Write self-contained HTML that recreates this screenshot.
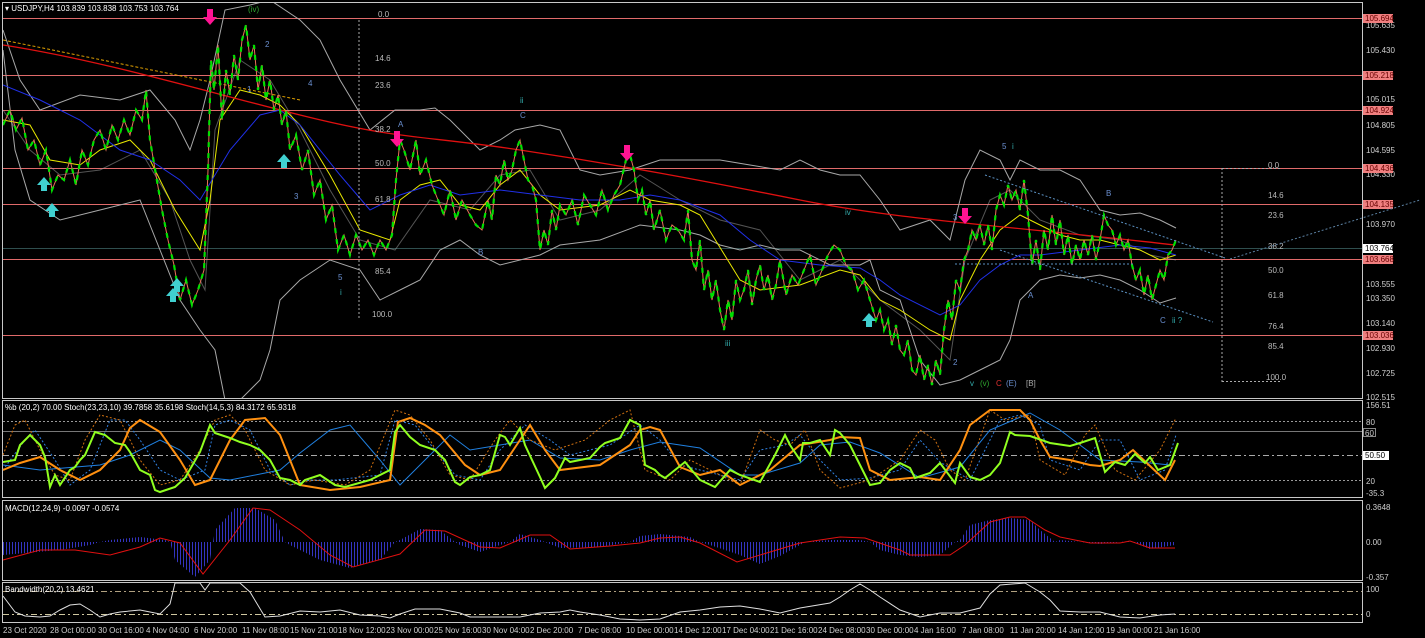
<!DOCTYPE html>
<html><head><meta charset="utf-8">
<style>
html,body{margin:0;padding:0;background:#000;width:1425px;height:638px;overflow:hidden}
svg{display:block}
text{font-family:"Liberation Sans",sans-serif;font-size:8px}
</style></head><body>
<svg width="1425" height="638" xmlns="http://www.w3.org/2000/svg">
<defs>
<pattern id="hb" width="3" height="10" patternUnits="userSpaceOnUse"><rect width="1" height="10" fill="#3434c0"/></pattern>
<clipPath id="cm"><rect x="3" y="3" width="1359" height="395"/></clipPath>
<polyline id="pr" fill="none" stroke-linejoin="miter" points="3,125 10,110 16,130 22,118 28,150 34,140 40,165 46,150 52,190 58,175 64,180 70,160 76,185 82,150 88,165 94,140 100,130 106,150 112,125 118,140 124,120 130,135 136,110 142,120 146,90 150,140 156,175 162,210 168,240 174,265 180,300 186,280 192,305 198,290 204,270 208,170 211,60 214,90 218,45 222,120 226,70 230,95 234,55 238,80 242,40 246,25 250,60 254,45 258,90 262,65 266,100 270,80 274,110 278,95 282,125 286,110 290,150 296,135 302,170 308,150 314,195 320,180 326,220 332,205 338,250 344,235 350,255 356,235 362,250 368,240 374,255 380,240 386,250 392,235 396,180 400,140 404,150 410,170 416,140 420,175 426,160 432,185 438,200 444,215 450,190 456,220 462,200 470,215 476,225 482,230 488,200 492,220 496,175 500,185 504,160 508,180 512,170 516,150 520,140 524,160 528,180 532,185 536,200 540,250 544,230 548,245 552,210 556,230 560,205 566,215 572,200 578,225 584,195 590,205 596,215 602,190 608,210 614,195 620,185 626,160 630,155 634,170 638,200 642,190 646,215 650,200 654,230 660,210 666,240 672,225 678,230 684,240 688,210 692,260 696,270 700,240 704,290 708,270 712,300 716,280 720,310 724,330 728,300 732,320 736,280 740,300 744,290 748,270 752,305 756,280 760,265 764,290 768,275 772,300 776,285 780,260 786,295 792,275 798,285 804,270 810,255 816,285 822,270 828,255 834,245 840,250 846,265 852,270 858,290 864,280 870,300 876,320 880,310 884,330 888,320 892,345 896,325 900,350 904,355 908,340 912,370 916,375 920,355 924,380 928,365 932,385 936,360 940,375 944,330 948,300 952,320 956,280 960,290 964,260 968,250 972,230 976,240 980,225 984,245 988,225 992,250 996,210 1000,195 1004,205 1008,185 1012,200 1016,190 1020,210 1024,180 1028,215 1032,265 1036,240 1040,270 1044,230 1048,250 1052,215 1056,245 1060,220 1064,255 1068,235 1072,265 1076,245 1080,260 1084,240 1088,255 1092,235 1096,260 1100,240 1104,215 1108,225 1112,230 1116,245 1120,235 1124,250 1128,240 1132,265 1136,280 1140,270 1144,295 1148,275 1152,300 1156,285 1160,270 1164,280 1168,255 1172,250 1176,240"/>
</defs>
<rect width="1425" height="638" fill="#000"/>
<g fill="none" stroke="#c8c8c8" stroke-width="1">
<rect x="2.5" y="2.5" width="1360" height="396"/>
<rect x="2.5" y="400.5" width="1360" height="97"/>
<rect x="2.5" y="500.5" width="1360" height="80"/>
<rect x="2.5" y="582.5" width="1360" height="40"/>
</g>
<g stroke="#e06a6a" stroke-width="1">
<line x1="3" y1="18.5" x2="1362" y2="18.5"/><line x1="3" y1="75.5" x2="1362" y2="75.5"/>
<line x1="3" y1="110.5" x2="1362" y2="110.5"/><line x1="3" y1="168.5" x2="1362" y2="168.5"/>
<line x1="3" y1="204.5" x2="1362" y2="204.5"/><line x1="3" y1="259.5" x2="1362" y2="259.5"/>
<line x1="3" y1="335.5" x2="1362" y2="335.5"/>
</g>
<line x1="3" y1="248.5" x2="1362" y2="248.5" stroke="#2f4f4f"/>
<g clip-path="url(#cm)" fill="none">
<polyline stroke="#a8a8a8" points="3,30 20,80 40,110 80,95 120,100 150,90 175,120 190,150 200,120 210,80 225,10 250,5 270,0 300,20 320,40 340,80 370,130 395,110 420,110 435,108 450,120 480,150 500,140 515,130 540,125 560,130 580,170 600,175 630,170 660,160 690,160 720,160 750,165 780,170 800,160 820,170 840,175 860,175 880,200 900,230 930,220 950,240 965,180 980,150 1000,160 1010,180 1020,160 1040,170 1060,170 1080,180 1100,210 1120,215 1140,213 1160,220 1176,228"/>
<polyline stroke="#a8a8a8" points="3,50 15,150 30,200 60,220 100,210 140,200 160,250 180,300 200,330 215,350 225,400 240,400 260,380 270,350 280,300 300,280 330,260 360,270 380,300 400,290 420,280 440,250 460,240 480,255 500,265 520,260 540,255 560,245 600,240 640,225 680,230 700,235 720,245 740,250 760,245 780,250 800,250 830,265 860,265 870,260 880,290 900,300 920,360 940,385 960,380 980,370 1000,360 1010,340 1020,300 1040,280 1060,275 1080,278 1100,275 1120,280 1140,290 1160,303 1176,298"/>
<polyline stroke="#a8a8a8" stroke-opacity="0.5" points="3,110 30,150 60,175 100,170 140,150 170,200 190,260 205,290 215,130 240,60 270,80 300,130 330,190 360,240 395,250 430,200 470,210 500,175 530,170 560,220 600,210 640,175 680,200 720,220 760,230 800,280 840,260 880,300 920,330 950,360 965,260 990,200 1010,190 1040,220 1080,235 1120,240 1150,255 1176,260"/>
<polyline stroke="#e8e800" points="3,120 30,125 50,160 80,165 100,150 130,140 150,160 175,210 200,250 210,200 220,120 240,90 260,95 280,105 300,125 330,175 360,230 390,240 400,200 420,185 440,180 460,205 480,210 500,185 520,170 540,195 560,210 600,205 630,190 650,200 680,205 700,215 740,280 760,290 800,285 840,270 860,275 880,300 900,310 930,330 950,340 960,300 980,260 1000,230 1020,215 1040,225 1060,235 1080,240 1100,240 1120,245 1140,250 1160,260 1176,255"/>
<polyline stroke="#2030e8" points="3,85 40,100 80,120 120,150 150,160 180,180 200,200 230,150 260,115 280,110 300,125 340,175 370,210 400,195 430,185 460,195 500,190 540,195 580,200 620,200 650,195 680,200 720,215 750,240 780,260 820,265 860,268 880,280 900,295 940,315 960,305 980,280 1000,265 1020,255 1040,255 1080,250 1120,245 1150,248 1176,255"/>
<path d="M3 45 C100 60 200 90 300 115 S420 135 520 150 S700 180 800 200 S1000 225 1175 245" stroke="#e01010" stroke-width="1.3"/>
<path d="M3 40 L300 100" stroke="#e0a000" stroke-dasharray="3,2"/>
<use href="#pr" stroke="#e8735a" stroke-width="1"/>
<use href="#pr" stroke="#00e000" stroke-width="2.2" stroke-dasharray="5,6"/>
<g stroke="#5a8fc0" stroke-dasharray="2,2">
<line x1="985" y1="175" x2="1225" y2="258"/><line x1="1000" y1="250" x2="1213" y2="322"/>
<line x1="955" y1="264" x2="1135" y2="264"/>
</g>
</g>
<g fill="#d0d0d0">
<text x="1366" y="28">105.635</text><text x="1366" y="53">105.430</text><text x="1366" y="102">105.015</text>
<text x="1366" y="128">104.805</text><text x="1366" y="153">104.595</text><text x="1366" y="177">104.330</text>
<text x="1366" y="227">103.970</text><text x="1366" y="287">103.555</text><text x="1366" y="301">103.350</text>
<text x="1366" y="326">103.140</text><text x="1366" y="351">102.930</text><text x="1366" y="376">102.725</text><text x="1366" y="400">102.515</text>
<text x="1366" y="408">156.51</text><text x="1366" y="425">80</text><text x="1366" y="484">20</text><text x="1366" y="496">-35.3</text>
<text x="1366" y="510">0.3648</text><text x="1366" y="545">0.00</text><text x="1366" y="580">-0.357</text>
<text x="1366" y="592">100</text><text x="1366" y="617">0</text>
</g>
<rect x="1363.5" y="428.5" width="12" height="8" fill="none" stroke="#888"/><text x="1365" y="436" fill="#ccc">60</text>
<rect x="1363" y="451" width="26" height="9" fill="#fff"/><text x="1365" y="458" fill="#000">50.50</text>
<g fill="#f08080">
<rect x="1363" y="14" width="30" height="9"/><rect x="1363" y="71" width="30" height="9"/>
<rect x="1363" y="106" width="30" height="9"/><rect x="1363" y="164" width="30" height="9"/>
<rect x="1363" y="200" width="30" height="9"/><rect x="1363" y="255" width="30" height="9"/><rect x="1363" y="331" width="30" height="9"/>
</g>
<rect x="1363" y="244" width="30" height="9" fill="#fff"/>
<g fill="#600">
<text x="1365" y="21">105.694</text><text x="1365" y="78">105.218</text><text x="1365" y="113">104.924</text>
<text x="1365" y="171">104.436</text><text x="1365" y="207">104.135</text><text x="1365" y="262">103.668</text><text x="1365" y="338">103.036</text>
</g>
<text x="1365" y="251" fill="#000">103.764</text>
<g fill="#d0d0d0" style="font-size:7px">
<text x="3" y="633">23 Oct 2020</text><text x="50" y="633">28 Oct 00:00</text><text x="98" y="633">30 Oct 16:00</text>
<text x="146" y="633">4 Nov 04:00</text><text x="194" y="633">6 Nov 20:00</text><text x="242" y="633">11 Nov 08:00</text>
<text x="290" y="633">15 Nov 21:00</text><text x="338" y="633">18 Nov 12:00</text><text x="386" y="633">23 Nov 00:00</text>
<text x="434" y="633">25 Nov 16:00</text><text x="482" y="633">30 Nov 04:00</text><text x="530" y="633">2 Dec 20:00</text>
<text x="578" y="633">7 Dec 08:00</text><text x="626" y="633">10 Dec 00:00</text><text x="674" y="633">14 Dec 12:00</text>
<text x="722" y="633">17 Dec 04:00</text><text x="770" y="633">21 Dec 16:00</text><text x="818" y="633">24 Dec 08:00</text>
<text x="866" y="633">30 Dec 00:00</text><text x="914" y="633">4 Jan 16:00</text><text x="962" y="633">7 Jan 08:00</text>
<text x="1010" y="633">11 Jan 20:00</text><text x="1058" y="633">14 Jan 12:00</text><text x="1106" y="633">19 Jan 00:00</text>
<text x="1154" y="633">21 Jan 16:00</text>
</g>
<text x="5" y="11" fill="#fff">▾ USDJPY,H4  103.839 103.838 103.753 103.764</text>
<text x="5" y="410" fill="#fff">%b (20,2) 70.00  Stoch(23,23,10) 39.7858 35.6198  Stoch(14,5,3) 84.3172 65.9318</text>
<text x="5" y="511" fill="#fff">MACD(12,24,9) -0.0097 -0.0574</text>
<g fill="#bbb">
<text x="378" y="17">0.0</text><text x="375" y="61">14.6</text><text x="375" y="88">23.6</text><text x="375" y="132">38.2</text>
<text x="375" y="166">50.0</text><text x="375" y="202">61.8</text><text x="375" y="274">85.4</text><text x="372" y="317">100.0</text>
<text x="1268" y="168">0.0</text><text x="1268" y="198">14.6</text><text x="1268" y="218">23.6</text><text x="1268" y="249">38.2</text>
<text x="1268" y="273">50.0</text><text x="1268" y="298">61.8</text><text x="1268" y="329">76.4</text><text x="1268" y="349">85.4</text><text x="1266" y="380">100.0</text>
</g>
<g stroke="#aaa" stroke-dasharray="2,2" fill="none">
<line x1="359" y1="20" x2="359" y2="318"/>
<line x1="1222" y1="168" x2="1222" y2="382"/>
<line x1="1222" y1="168.5" x2="1282" y2="168.5"/><line x1="1222" y1="381.5" x2="1282" y2="381.5"/>
<line x1="1230" y1="259" x2="1420" y2="200" stroke="#5a7fa0"/>
</g>
<g>
<text x="248" y="12" fill="#2ea52e">(iv)</text>
<text x="265" y="47" fill="#6a8fd0">2</text><text x="247" y="92" fill="#6a8fd0">1</text><text x="308" y="86" fill="#6a8fd0">4</text>
<text x="294" y="199" fill="#6a8fd0">3</text><text x="520" y="103" fill="#3aa">ii</text><text x="520" y="118" fill="#6a8fd0">C</text>
<text x="398" y="127" fill="#6a8fd0">A</text><text x="478" y="255" fill="#6a8fd0">B</text><text x="340" y="295" fill="#3aa">i</text>
<text x="338" y="280" fill="#6a8fd0">5</text><text x="845" y="215" fill="#3aa">iv</text><text x="725" y="346" fill="#3aa">iii</text>
<text x="1002" y="149" fill="#6a8fd0">5</text><text x="1012" y="149" fill="#3aa">i</text><text x="953" y="220" fill="#6a8fd0">3</text>
<text x="1106" y="196" fill="#6a8fd0">B</text><text x="1028" y="298" fill="#6a8fd0">A</text><text x="953" y="365" fill="#6a8fd0">2</text>
<text x="1160" y="323" fill="#6a8fd0">C</text><text x="1172" y="323" fill="#3aa">ii ?</text>
<text x="970" y="386" fill="#3aa">v</text><text x="980" y="386" fill="#2ea52e">(v)</text><text x="996" y="386" fill="#e03030">C</text>
<text x="1006" y="386" fill="#6a8fd0">(E)</text><text x="1026" y="386" fill="#aaa">[B]</text>
</g>
<g fill="#ff1493">
<path d="M207 9h6v8h4l-7 8-7-8h4z"/><path d="M394 131h6v8h4l-7 8-7-8h4z"/><path d="M624 145h6v8h4l-7 8-7-8h4z"/><path d="M962 208h6v8h4l-7 8-7-8h4z"/>
</g>
<g fill="#40d0d0">
<path d="M41 191v-6h-4l7-8 7 8h-4v6z"/><path d="M49 217v-6h-4l7-8 7 8h-4v6z"/><path d="M281 168v-6h-4l7-8 7 8h-4v6z"/>
<path d="M170 302v-6h-4l7-8 7 8h-4v6z"/><path d="M866 327v-6h-4l7-8 7 8h-4v6z"/><path d="M174 292v-6h-4l7-8 7 8h-4v6z"/>
</g>
<g fill="none">
<line x1="3" y1="421.5" x2="1362" y2="421.5" stroke="#999" stroke-dasharray="2,2"/>
<line x1="3" y1="431.5" x2="1362" y2="431.5" stroke="#777"/>
<line x1="3" y1="455.5" x2="1362" y2="455.5" stroke="#aaa" stroke-dasharray="6,3,2,3"/>
<line x1="3" y1="480.5" x2="1362" y2="480.5" stroke="#999" stroke-dasharray="2,2"/>
<polyline stroke="#2080e0" points="3,465 40,470 100,465 130,455 160,440 180,450 210,478 230,480 280,470 300,453 330,430 350,425 380,460 400,485 450,435 470,450 500,445 530,440 560,458 600,460 630,450 660,442 700,448 740,475 760,475 800,463 820,445 850,442 880,453 920,478 960,467 990,430 1030,413 1060,430 1100,460 1140,462 1170,465"/>
<polyline stroke="#3080e0" stroke-dasharray="2,2" points="3,470 25,440 35,430 55,460 70,485 90,470 110,420 125,420 140,440 160,470 180,480 205,470 215,425 230,420 250,430 270,470 290,485 310,480 335,480 380,475 395,420 415,425 435,450 455,475 480,480 500,450 525,425 550,440 570,455 610,445 640,425 660,440 680,465 700,470 740,480 760,450 785,445 800,435 820,460 840,480 870,478 900,470 920,440 940,462 970,480 1000,420 1020,415 1040,425 1050,460 1080,470 1100,440 1120,440 1140,480 1165,470 1176,435"/>
<polyline stroke="#d07010" stroke-dasharray="2,2" points="3,455 15,425 25,420 40,450 55,475 70,480 85,440 100,415 120,420 140,460 160,485 180,480 200,450 215,420 230,415 245,430 265,470 290,485 315,480 345,485 370,470 395,410 410,415 430,440 450,475 470,480 495,440 510,420 530,440 555,450 585,440 610,420 630,410 645,470 670,480 690,460 710,470 740,485 760,430 775,440 790,445 805,430 820,470 840,488 870,480 900,460 920,430 935,440 950,470 965,480 990,410 1005,420 1030,415 1040,460 1065,475 1085,435 1095,425 1115,470 1135,480 1160,450 1176,418"/>
<polyline stroke="#ff9010" stroke-width="2" points="3,470 20,463 40,457 60,470 80,480 100,470 120,450 130,428 140,420 160,432 180,460 195,485 210,480 230,440 245,420 265,418 280,435 300,485 330,490 360,487 390,480 398,422 410,418 425,425 440,435 465,465 480,475 500,470 520,440 530,425 545,450 560,470 600,465 630,445 640,430 650,427 660,430 680,467 700,475 720,470 740,485 770,470 800,445 830,440 840,437 860,438 870,470 890,480 920,477 940,480 960,450 970,425 990,410 1020,410 1030,420 1040,440 1050,457 1070,460 1090,465 1100,466 1120,460 1133,450 1150,466 1165,480 1175,460"/>
<polyline stroke="#90ff20" stroke-width="2" points="3,462 15,460 20,445 30,435 40,445 45,457 50,487 55,475 60,485 70,470 75,467 80,460 85,455 95,432 105,435 115,443 125,445 130,452 140,470 150,475 155,490 160,492 175,487 185,478 200,452 210,425 215,433 230,438 240,442 250,445 260,450 270,460 280,478 290,480 300,485 305,480 320,475 335,485 345,487 370,480 390,470 395,432 400,425 410,437 420,445 435,450 445,460 455,482 460,485 470,477 480,475 490,470 500,435 505,437 510,445 520,428 525,445 540,477 545,488 555,478 565,458 570,462 580,460 590,458 600,447 605,443 620,438 630,420 640,425 645,465 655,470 660,475 665,478 675,470 685,462 700,480 715,487 730,470 740,475 760,482 775,455 785,435 790,445 800,460 803,443 810,443 820,440 830,455 835,430 840,433 850,445 860,465 870,485 880,483 890,470 900,463 910,468 915,478 930,473 940,463 955,483 960,463 970,477 980,480 990,475 1000,463 1010,432 1015,435 1030,436 1050,443 1070,446 1080,443 1095,438 1105,472 1115,462 1125,465 1135,454 1145,463 1150,457 1158,470 1170,465 1178,443"/>
</g>
<polygon fill="url(#hb)" points="3,542 3,555 60,550 90,545 100,542 110,540 140,537 165,540 170,542 175,560 195,577 210,560 213,542 215,530 235,508 255,508 275,520 285,542 290,545 320,560 350,568 380,560 395,542 400,540 420,529 440,530 455,542 460,545 480,552 500,545 510,542 520,534 540,540 545,542 560,548 600,547 630,542 640,536 660,534 690,537 700,542 710,545 740,555 760,564 780,556 800,545 805,542 830,540 860,540 870,542 880,550 900,555 920,557 940,555 955,542 960,540 970,525 990,520 1010,518 1030,520 1040,530 1055,542 1060,540 1100,544 1130,541 1150,549 1175,545 1175,542"/>
<polyline fill="none" stroke="#e01010" points="3,560 40,550 75,550 110,555 140,547 160,538 180,543 203,574 230,540 253,508 270,510 300,530 330,555 353,567 400,554 425,530 445,531 480,547 500,548 530,535 550,535 570,549 610,546 640,543 660,538 680,537 700,543 737,562 770,552 800,543 840,537 865,538 900,550 910,555 950,555 965,545 990,522 1010,517 1025,517 1045,530 1060,537 1090,543 1120,543 1130,541 1150,548 1175,548"/>
<line x1="3" y1="591.5" x2="1362" y2="591.5" stroke="#b0a080" stroke-dasharray="6,3,2,3"/>
<line x1="3" y1="614.5" x2="1362" y2="614.5" stroke="#d0c8a0" stroke-dasharray="6,3,2,3"/>
<polyline fill="none" stroke="#e0e0e0" points="3,596 15,612 25,616 40,617 50,616 60,610 70,605 80,604 90,610 100,617 110,614 120,612 140,610 150,612 160,614 170,604 175,583 200,583 205,590 210,583 240,583 250,592 265,617 280,616 300,611 320,612 340,610 360,615 380,616 390,618 400,614 415,609 440,609 460,613 470,617 520,617 540,613 560,612 570,610 580,612 600,615 620,619 640,620 660,619 680,612 700,610 720,607 740,606 760,609 780,613 800,608 830,603 840,597 850,590 860,584 870,590 880,597 900,610 920,617 940,613 960,613 980,608 990,594 1000,585 1025,583 1040,592 1050,600 1060,611 1080,612 1100,612 1120,617 1140,618 1160,615 1175,614"/>
<text x="5" y="592" fill="#fff">Bandwidth(20,2) 13.4621</text>
</svg>
</body></html>
